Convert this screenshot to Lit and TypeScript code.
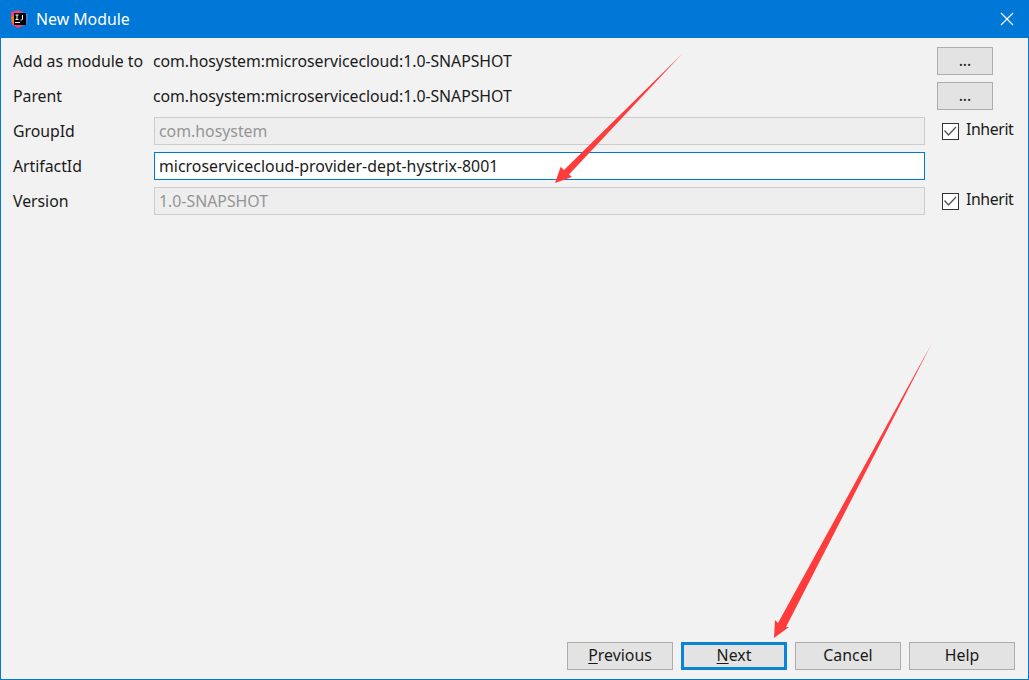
import { LitElement, html, css, svg } from "lit";
import { customElement } from "lit/decorators.js";

@customElement("app-root")
export class AppRoot extends LitElement {
  static styles = css`
    :host { display: block; width: 1029px; height: 680px; font-family: "Noto Sans", "Open Sans", sans-serif; font-size: 15.85px; color: #1a1a1a; }
    .win { position: relative; box-sizing: border-box; width: 1029px; height: 680px; background: #f2f2f2; border: 1px solid #0078d7; border-top: 0; display: flex; flex-direction: column; overflow: hidden; }
    .title { height: 38px; flex: none; background: #0078d7; margin: 0 -1px; display: flex; align-items: center; padding: 0 12px 0 11px; color: #fff; }
    .title .logo { width: 17px; height: 18px; margin-right: 8px; flex: none; }
    .title .name { flex: 1; }
    .title svg.x { width: 14px; height: 14px; margin-right: 3px; }
    .form { display: grid; grid-template-columns: 140px 771px 1fr; grid-auto-rows: 28px; row-gap: 7px; padding: 9px 0 0 12px; align-items: center; flex: 1; align-content: start; }
    .label { grid-column: 1; white-space: nowrap; line-height: 28px; height: 28px; letter-spacing: -0.04px; }
    .cell { grid-column: 2; margin-left: 1px; }
    .value { white-space: nowrap; margin-left: 0; line-height: 28px; height: 28px; letter-spacing: -0.05px; }
    .field { box-sizing: border-box; height: 28px; width: 771px; border: 1px solid #ccc; background: #eeeeee; color: #959595; padding: 0 4px; line-height: 26px; white-space: nowrap; }
    .field.active { border-color: #0078d7; background: #fff; color: #1a1a1a; letter-spacing: 0.02px; }
    .btn { box-sizing: border-box; background: #e3e3e3; border: 1px solid #adadad; height: 28px; display: flex; align-items: center; justify-content: center; color: #1a1a1a; line-height: 24px; padding-bottom: 2px; }
    .dots { grid-column: 3; width: 56px; margin-left: 13px; }
    .check { grid-column: 3; margin-left: 18px; display: flex; align-items: center; gap: 7px; white-space: nowrap; }
    .check span.t { position: relative; top: -2px; letter-spacing: -0.4px; }
    .box { box-sizing: border-box; width: 17px; height: 17px; border: 1px solid #333; background: #fff; display: flex; align-items: center; justify-content: center; }
    .box svg { width: 13px; height: 13px; }
    .foot { display: flex; justify-content: flex-end; gap: 8px; padding: 0 13px 9px 0; }
    .foot .btn { width: 106px; }
    .foot .btn.primary { border: 3px solid #0a84d8; }
    u { text-underline-offset: 2px; }
    .ann { position: absolute; left: -1px; top: 0; width: 1029px; height: 680px; pointer-events: none; }
  `;

  render() {
    const dots = html`<div class="btn dots">...</div>`;
    const check = html`<div class="check"><span class="box"><svg viewBox="0 0 13 13"><path d="M0.500 5.500 4.500 10 12 2" fill="none" stroke="#555" stroke-width="1.3"/></svg></span><span class="t">Inherit</span></div>`;
    const coord = "com.hosystem:microservicecloud:1.0-SNAPSHOT";
    return html`<div class="win">
      <div class="title">
        <svg class="logo" viewBox="0 0 17 18">
          <path d="M0 2 8 0 12 3 17 5 16 14 7 18 1 15Z" fill="#fc3e7a"/>
          <path d="M10 1 17 4 16 14 11 16Z" fill="#3b82e8"/>
          <path d="M0 7 3 5 4 13 1 13Z" fill="#f97a12"/>
          <rect x="3" y="3" width="12" height="12" fill="#000"/>
          <rect x="4" y="12" width="5" height="1" fill="#fff"/>
          <path d="M4.500 5h3M6 5v4.500M4.500 9.500h3M11.500 5v4c0 .8-.6 1-1 1H9.500" fill="none" stroke="#fff" stroke-width="1"/>
        </svg>
        <span class="name">New Module</span>
        <svg class="x" viewBox="0 0 14 14"><path d="M1 1 13 13M13 1 1 13" stroke="#fff" stroke-width="1.200" fill="none"/></svg>
      </div>
      <div class="form">
        <div class="label">Add as module to</div><div class="value cell">${coord}</div>${dots}
        <div class="label">Parent</div><div class="value cell">${coord}</div>${dots}
        <div class="label">GroupId</div><div class="field cell">com.hosystem</div>${check}
        <div class="label">ArtifactId</div><div class="field active cell">microservicecloud-provider-dept-hystrix-8001</div><div></div>
        <div class="label">Version</div><div class="field cell">1.0-SNAPSHOT</div>${check}
      </div>
      <div class="foot">
        <div class="btn"><span><u>P</u>revious</span></div>
        <div class="btn primary"><span><u>N</u>ext</span></div>
        <div class="btn">Cancel</div>
        <div class="btn">Help</div>
      </div>
      <svg class="ann" viewBox="0 0 1029 680">
        ${svg`<path d="M682 54 L564 170 L560.700 166.700 L555 183 L572 177 L569 174.500 Z" fill="#ff3b3b"/>`}
        ${svg`<path d="M932 343 L778 623 L775 620 L774 638 L789 627 L786 627 Z" fill="#ff3b3b"/>`}
      </svg>
    </div>`;
  }
}
